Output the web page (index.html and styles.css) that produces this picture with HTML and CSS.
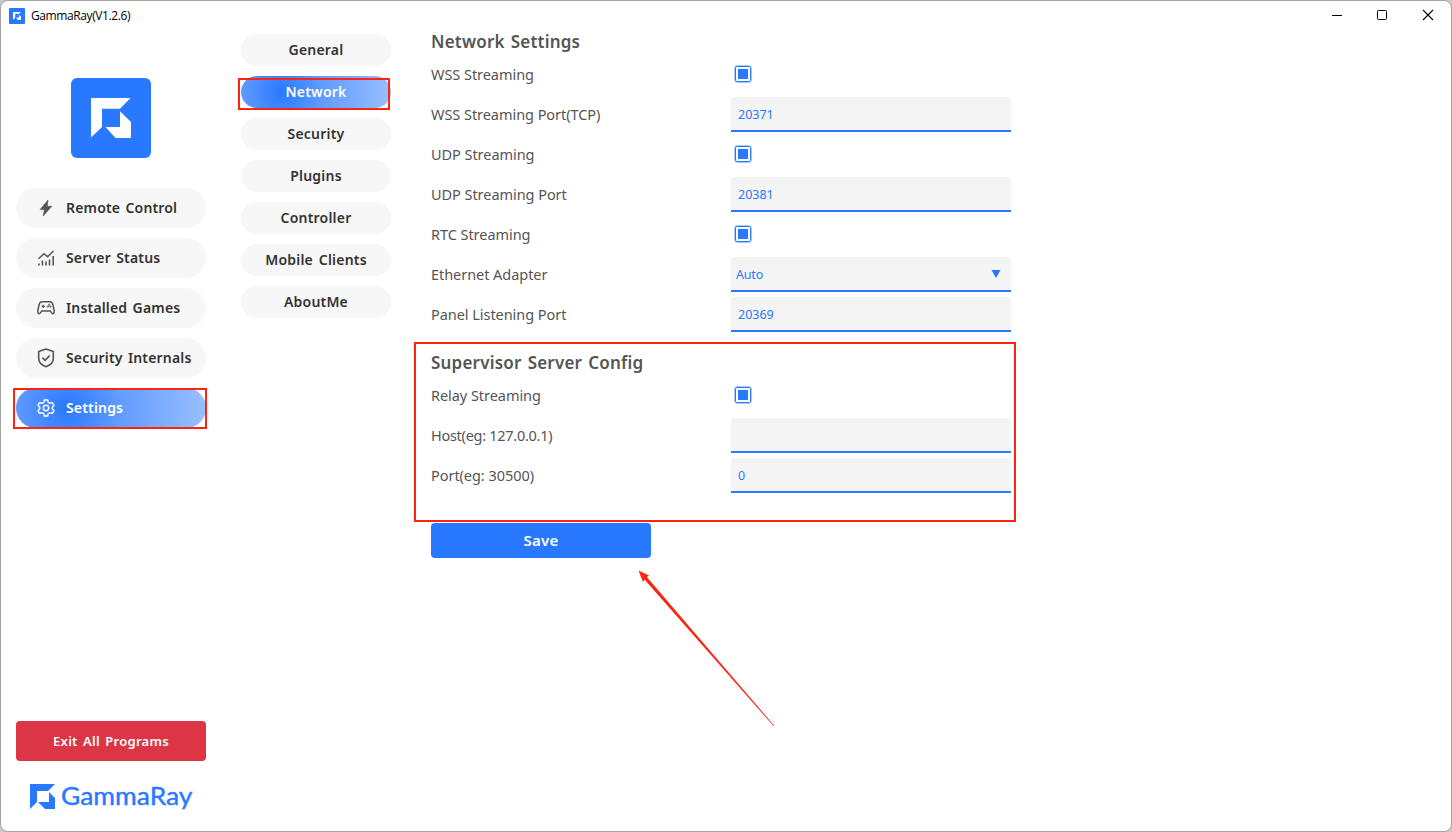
FILE: index.html
```html
<!DOCTYPE html>
<html lang="en">
<head>
<meta charset="utf-8">
<title>GammaRay(V1.2.6)</title>
<link rel="stylesheet" href="styles.css">
</head>
<body>
<div class="window">
  <header class="titlebar">
    <svg class="app-icon" viewBox="0 0 80 80"><rect width="80" height="80" rx="4" fill="#2879ff"/><path fill="#fff" d="M20 20H59.500L49 30.500H31V49L20 59.500ZM49.500 33.500L60 44V60H44.500L34.500 49H49.500Z"/></svg>
    <span class="title">GammaRay(V1.2.6)</span>
    <svg class="controls" width="106" height="14" viewBox="0 0 106 14" fill="none" stroke="#000"><path d="M1 7.500H11"/><rect x="46.500" y="2.500" width="9" height="9" rx="1"/><path d="M92 2L102 12M102 2L92 12" stroke-width="1.100"/></svg>
  </header>
  <div class="body">
    <aside class="sidebar">
      <svg class="logo" viewBox="0 0 80 80"><rect width="80" height="80" rx="6" fill="#2879ff"/><path fill="#fff" d="M20 20H59.500L49 30.800H31V49L20 59.500ZM49 33.300L60 44V60H44.500L34.500 49H49Z"/></svg>
      <nav class="main-nav">
        <a class="nav-item"><svg viewBox="0 0 20 20"><path fill="#555" stroke="#555" stroke-width=".6" stroke-linejoin="round" d="M12 2L4.100 11.600H8.400L7.200 18L15.900 8.300H11.300Z"/></svg><span>Remote Control</span></a>
        <a class="nav-item"><svg viewBox="0 0 20 20" fill="none" stroke="#555"><path stroke-width="1.500" d="M2.500 10.800L8 5.700L11.600 8.700L17.500 3"/><path stroke-width="1.600" d="M3 15.500V17.500M6.400 12.500V17.500M10 13.500V17.500M13.500 11.500V17.500M17.200 8V17.500"/></svg><span>Server Status</span></a>
        <a class="nav-item"><svg viewBox="0 0 20 20" fill="none" stroke="#555" stroke-width="1.500"><path d="M5.700 3.700H14.300C15.900 3.700 16.500 5 17 7L18.200 13C18.600 15.800 16.600 16.300 15.600 14.900L14.200 12.900H5.800L4.400 14.900C3.400 16.300 1.400 15.800 1.800 13L3 7C3.500 5 4.100 3.700 5.700 3.700Z"/><path d="M7.200 6.700V10.100M5.500 8.400H8.900" stroke-width="1.200"/><circle cx="11.800" cy="8.600" r=".7" stroke-width=".9"/><circle cx="14.400" cy="8.600" r=".7" stroke-width=".9"/><circle cx="13.100" cy="6.800" r=".7" stroke-width=".9"/></svg><span>Installed Games</span></a>
        <a class="nav-item"><svg viewBox="0 0 20 20" fill="none" stroke="#555" stroke-width="1.600"><path d="M10 1L17.300 3.400V10.500C17.300 14.500 14 17.300 10 18.700C6 17.300 2.700 14.500 2.700 10.500V3.400Z" stroke-linejoin="round"/><path d="M6.300 9.700L9 12.300L13.700 7.600"/></svg><span>Security Internals</span></a>
        <a class="nav-item active"><svg viewBox="0 0 20 20" fill="none" stroke="#fff" stroke-width="1.400" stroke-linejoin="round"><path d="M8.300 2H11.700L12.200 4.300L14.100 5.300L16.300 4.500L18 7.400L16.300 9V11L18 12.600L16.300 15.500L14.100 14.700L12.200 15.700L11.700 18H8.300L7.800 15.700L5.900 14.700L3.700 15.500L2 12.600L3.700 11V9L2 7.400L3.700 4.500L5.900 5.300L7.800 4.300Z"/><circle cx="10" cy="10" r="2.700"/></svg><span>Settings</span></a>
      </nav>
      <button class="exit">Exit All Programs</button>
      <svg class="wordmark" viewBox="0 0 170 36"><path fill="#2879ff" d="M0 0H25L18 7H7V18L0 25ZM19 8L25 14V25H15L8 18H19Z"/><text x="31" y="21" textLength="131.500" lengthAdjust="spacingAndGlyphs">GammaRay</text></svg>
    </aside>
    <nav class="sub-nav">
      <a class="sub-item"><span>General</span></a>
      <a class="sub-item active"><span>Network</span></a>
      <a class="sub-item"><span>Security</span></a>
      <a class="sub-item"><span>Plugins</span></a>
      <a class="sub-item"><span>Controller</span></a>
      <a class="sub-item"><span>Mobile Clients</span></a>
      <a class="sub-item"><span>AboutMe</span></a>
    </nav>
    <main class="content">
      <h2>Network Settings</h2>
      <div class="row"><span class="label">WSS Streaming</span><i class="check"></i></div>
      <div class="row"><span class="label">WSS Streaming Port(TCP)</span><div class="field">20371</div></div>
      <div class="row"><span class="label">UDP Streaming</span><i class="check"></i></div>
      <div class="row"><span class="label">UDP Streaming Port</span><div class="field">20381</div></div>
      <div class="row"><span class="label">RTC Streaming</span><i class="check"></i></div>
      <div class="row"><span class="label">Ethernet Adapter</span><div class="field select"><span>Auto</span><svg width="10" height="8" viewBox="0 0 10 8"><path fill="#2879ff" d="M.5 0H9.500L5 8Z"/></svg></div></div>
      <div class="row"><span class="label">Panel Listening Port</span><div class="field">20369</div></div>
      <h2 class="second">Supervisor Server Config</h2>
      <div class="row"><span class="label">Relay Streaming</span><i class="check"></i></div>
      <div class="row"><span class="label tight">Host(eg: 127.0.0.1)</span><div class="field"></div></div>
      <div class="row"><span class="label">Port(eg: 30500)</span><div class="field">0</div></div>
      <button class="save">Save</button>
    </main>
  </div>
</div>
<svg class="marks" width="1452" height="832" fill="none" stroke="#fd2413" stroke-width="2"><rect x="239" y="79" width="150" height="30"/><rect x="14" y="389" width="192" height="39"/><rect x="415" y="343" width="600" height="178"/><path fill="#fd2413" stroke="none" d="M638.500 570.500L649 575.500L646.800 577L774 725.500L773.500 726L644.500 579.500L643 582Z"/></svg>
</body>
</html>
```
FILE: styles.css
```css
* { box-sizing: border-box; }
body { margin: 0; width: 1452px; height: 832px; overflow: hidden; background: #c9c9c9; font-family: "Noto Sans", sans-serif; }
.window { width: 1452px; height: 832px; background: #fff; border: 1px solid #a3a3a3; border-radius: 8px; }
.titlebar { height: 29px; display: flex; align-items: center; padding: 0 14px 0 8px; }
.app-icon { width: 16px; height: 16px; margin-right: 6px; }
.title { font: 12px "Open Sans", sans-serif; letter-spacing: -0.4px; color: #000; }
.controls { margin: -1px 0 0 auto; }
.body { display: flex; height: 801px; }
.sidebar { width: 190px; margin-left: 15px; display: flex; flex-direction: column; }
.logo { width: 80px; height: 80px; margin: 48px auto 30px; flex: none; }
.main-nav { display: flex; flex-direction: column; gap: 10px; }
.nav-item { height: 40px; border-radius: 20px; background: #f7f7f7; display: flex; align-items: center; padding-left: 20px; gap: 10px; font-size: 14px; font-weight: 600; letter-spacing: .17px; word-spacing: 1.500px; color: #333; white-space: nowrap; }
.nav-item svg { width: 20px; height: 20px; }
.nav-item span, .sub-item span { padding-bottom: 2px; }
.active.active { color: #fff; background: radial-gradient(circle at 27% 50%, #2879ff 0%, #619cff 38%, #9abfff 100%); }
.exit { font-family: inherit; margin-top: 293px; height: 40px; flex: none; border: 0; border-radius: 4px; background: #dc3545; color: #fff; font-size: 13px; font-weight: 600; letter-spacing: .28px; word-spacing: 1.700px; padding: 0; }
.wordmark { width: 170px; height: 36px; margin: 23px 0 0 14px; flex: none; overflow: visible; }
.wordmark text { font: 25px Lato, sans-serif; fill: #2879ff; stroke: #2879ff; stroke-width: .4px; }
.sub-nav { width: 150px; margin: 4px 0 0 35px; display: flex; flex-direction: column; gap: 10px; }
.sub-item { height: 32px; border-radius: 16px; background: #f7f7f7; display: flex; align-items: center; justify-content: center; font-size: 14px; font-weight: 600; letter-spacing: .2px; word-spacing: 2px; color: #333; }
.content { width: 580px; margin-left: 40px; color: #555; }
h2 { font-size: 17px; line-height: 23px; height: 25px; font-weight: 600; letter-spacing: .2px; word-spacing: 1.500px; margin: 0; white-space: nowrap; }
h2.second { margin-top: 16px; }
.row { height: 40px; display: flex; align-items: center; }
.label { width: 300px; padding-bottom: 2px; font-size: 14.500px; letter-spacing: -.05px; white-space: nowrap; }
.label.tight { letter-spacing: -.28px; }
.field { width: 280px; height: 35px; margin-bottom: 1px; padding-left: 7px; background: #f4f4f4; border-bottom: 2px solid #2879ff; border-radius: 4px 4px 0 0; color: #2879ff; font-size: 12.500px; line-height: 35px; }
.select { padding: 0 10px 0 5px; display: flex; align-items: center; justify-content: space-between; }
.select span { padding-top: 2px; letter-spacing: -.2px; }
.check { width: 18px; height: 18px; margin: 0 0 2px 3px; border: 1px solid #a9c9ff; border-radius: 3px; display: flex; align-items: center; justify-content: center; box-shadow: inset 0 0 0 1px #2879ff; }
.check::before { content: ""; width: 10px; height: 10px; background: #2879ff; }
.save { display: block; font-family: inherit; width: 220px; height: 35px; margin-top: 27px; border: 0; border-radius: 4px; background: #2879ff; color: #fff; font-size: 15px; font-weight: 600; letter-spacing: .3px; padding: 0 0 2px; }
.marks { position: absolute; left: 0; top: 0; pointer-events: none; }
```
